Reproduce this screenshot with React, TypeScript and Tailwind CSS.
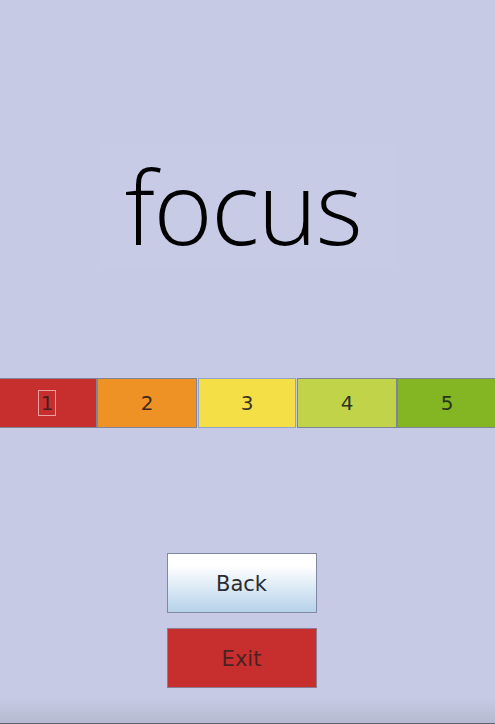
import React from "react";

const levels = [
  { n: "1", bg: "bg-[#c62f2d]", border: "border-[#7d8596]", text: "text-[#4a1e1e]" },
  { n: "2", bg: "bg-[#ef9226]", border: "border-[#7d8596]", text: "text-[#3e2a1a]" },
  { n: "3", bg: "bg-[#f5df47]", border: "border-[#8fa4c8]", text: "text-[#3a3420]" },
  { n: "4", bg: "bg-[#c1d449]", border: "border-[#7d8596]", text: "text-[#2f3420]" },
  { n: "5", bg: "bg-[#84b623]", border: "border-[#7d8596]", text: "text-[#2a331a]" },
];

export default function App() {
  return (
    <div className="relative flex h-[724px] w-[495px] flex-col items-center overflow-hidden bg-[#c6cae4] font-['DejaVu_Sans',sans-serif]">
      <div className="mt-[145px] flex h-[123px] w-[298px] items-center justify-center bg-[#c7cbe5] pr-[9px]">
        <span className="font-['Open_Sans',sans-serif] text-[101px] font-light leading-none tracking-[-1.5px] text-black">
          focus
        </span>
      </div>

      <div className="mt-[110px] ml-[-3px] grid h-[50px] w-[500px] grid-cols-5 self-start">
        {levels.map((l, i) => (
          <div
            key={l.n}
            className={`flex items-center justify-center border ${l.bg} ${l.border} ${i === 2 ? "mx-[1px]" : ""}`}
          >
            <span
              className={`text-[20px] ${l.text} ${i === 0 ? "border border-[#e8a0a0] px-[2px] leading-[24px]" : ""}`}
            >
              {l.n}
            </span>
          </div>
        ))}
      </div>

      <div className="mt-[125px] mr-[12px] flex flex-col gap-[15px]">
        <button className="h-[60px] w-[150px] border border-[#7f8aa2] bg-gradient-to-b from-white from-20% to-[#b6d2ea] pt-[3px] text-[21px] text-[#2a2c30]">
          Back
        </button>
        <button className="h-[60px] w-[150px] border border-[#8a7c92] bg-[#c62f2d] pt-[3px] text-[21px] text-[#4a2222]">
          Exit
        </button>
      </div>

      <div className="absolute bottom-0 left-0 h-[26px] w-full bg-gradient-to-b from-[#c6cae4] to-[#b6b9cf]" />
      <div className="absolute bottom-0 left-0 h-[1px] w-full bg-[#5c5f6e]" />
    </div>
  );
}
